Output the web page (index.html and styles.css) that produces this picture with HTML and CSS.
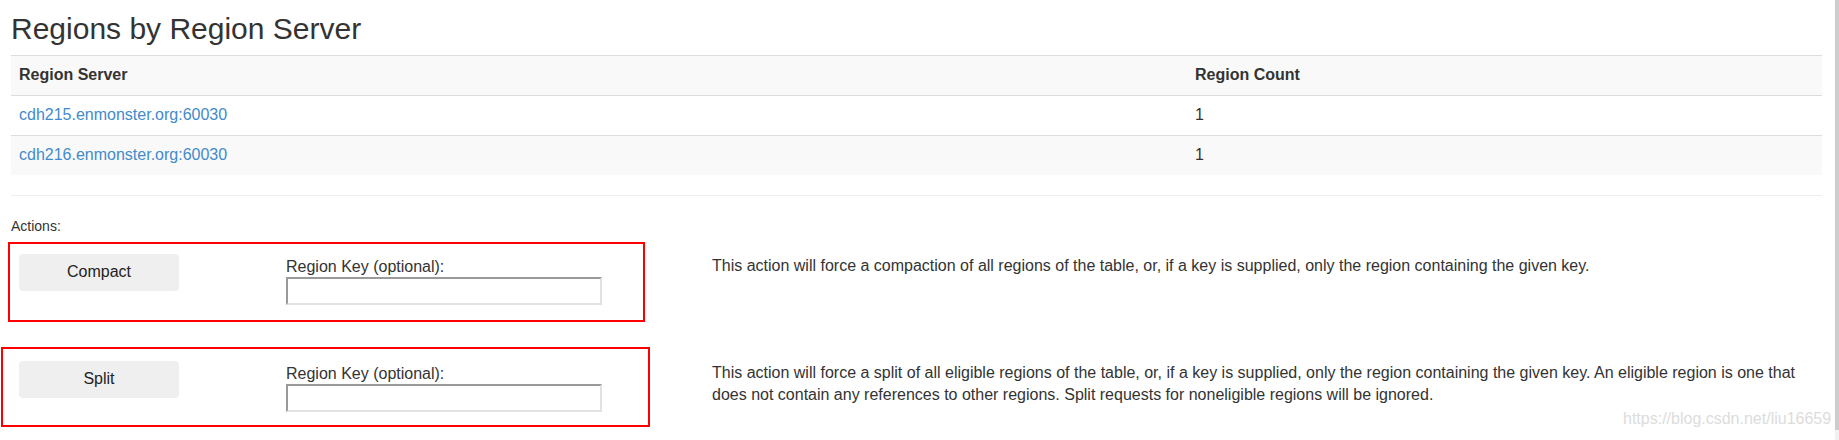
FILE: index.html
```html
<!DOCTYPE html>
<html lang="en">
<head>
<meta charset="utf-8">
<title>Regions by Region Server</title>
<link rel="stylesheet" href="styles.css">
</head>
<body>
<div class="page">
  <h2 class="title">Regions by Region Server</h2>
  <table class="rs-table">
    <tr class="striped">
      <th class="col-server">Region Server</th>
      <th>Region Count</th>
    </tr>
    <tr>
      <td><a href="#">cdh215.enmonster.org:60030</a></td>
      <td>1</td>
    </tr>
    <tr class="striped">
      <td><a href="#">cdh216.enmonster.org:60030</a></td>
      <td>1</td>
    </tr>
  </table>
  <hr class="rule">
  <p class="actions-label">Actions:</p>
  <div class="action-row first">
    <div class="btn-cell"><button class="btn" type="button">Compact</button></div>
    <div class="key-cell">
      <div class="key-label">Region Key (optional):</div>
      <input class="key-input" type="text">
    </div>
    <div class="desc">This action will force a compaction of all regions of the table, or, if a key is supplied, only the region containing the given key.</div>
  </div>
  <div class="action-row second">
    <div class="btn-cell"><button class="btn" type="button">Split</button></div>
    <div class="key-cell">
      <div class="key-label">Region Key (optional):</div>
      <input class="key-input" type="text">
    </div>
    <div class="desc">This action will force a split of all eligible regions of the table, or, if a key is supplied, only the region containing the given key. An eligible region is one that does not contain any references to other regions. Split requests for noneligible regions will be ignored.</div>
  </div>
</div>
<div class="mark mark-compact"></div>
<div class="mark mark-split"></div>
<div class="watermark">https://blog.csdn.net/liu16659</div>
<div class="scroll-thumb"></div>
<div class="scroll-rest"></div>
</body>
</html>
```
FILE: styles.css
```css
html, body {
  margin: 0;
  padding: 0;
  background: #ffffff;
}
body {
  position: relative;
  width: 1839px;
  height: 440px;
  overflow: hidden;
  font-family: "Liberation Sans", Arial, sans-serif;
  font-size: 16px;
  line-height: 1.42857;
  color: #333333;
}
.page {
  padding: 12px 17px 0 11px;
}
.title {
  margin: 0 0 10px 0;
  font-size: 30px;
  line-height: 33px;
  font-weight: normal;
  color: #333333;
}
.rs-table {
  width: 100%;
  border-collapse: collapse;
  border-spacing: 0;
  margin-bottom: 20px;
}
.rs-table th,
.rs-table td {
  padding: 8px;
  border-top: 1px solid #dddddd;
  text-align: left;
  vertical-align: top;
  line-height: 1.42857;
}
.rs-table th {
  font-weight: bold;
}
.col-server {
  width: 1160px;
}
.rs-table .striped {
  background: #f9f9f9;
}
.rs-table a {
  color: #428bca;
  text-decoration: none;
}
.rule {
  margin: 20px 0;
  border: 0;
  border-top: 1px solid #eeeeee;
  height: 0;
}
.actions-label {
  margin: 0;
  font-size: 14px;
  line-height: 20px;
}
.action-row {
  display: grid;
  grid-template-columns: 275px 426px 1fr;
  align-items: start;
}
.action-row.first {
  margin-top: 18px;
}
.action-row.second {
  margin-top: 56px;
}
.btn-cell {
  padding-left: 8px;
}
.btn {
  display: block;
  width: 160px;
  height: 37px;
  padding: 6px 12px;
  border: 0;
  border-radius: 4px;
  background: #efefef;
  color: #222222;
  font-family: "Liberation Sans", Arial, sans-serif;
  font-size: 16px;
  line-height: 1.42857;
  text-align: center;
}
.key-cell {
  padding-top: 2px;
}
.key-label {
  line-height: 21px;
}
.key-input {
  display: block;
  box-sizing: border-box;
  width: 316px;
  height: 28px;
  margin: 0;
  padding: 0 4px;
  border-style: solid;
  border-width: 2px;
  border-color: #9a9a9a #e2e2e2 #e2e2e2 #9a9a9a;
  background: #ffffff;
  font-family: "Liberation Sans", Arial, sans-serif;
  font-size: 14px;
}
.desc {
  padding-top: 1px;
  line-height: 22.86px;
}
.mark {
  position: absolute;
  box-sizing: border-box;
  border: 2px solid #ff0000;
  height: 80px;
}
.mark-compact {
  left: 8px;
  top: 242px;
  width: 637px;
}
.mark-split {
  left: 1px;
  top: 347px;
  width: 649px;
}
.watermark {
  position: absolute;
  left: 1623px;
  top: 411px;
  font-size: 16px;
  line-height: 16px;
  color: #dcdcdc;
  white-space: nowrap;
}
.scroll-thumb {
  position: absolute;
  right: 0;
  top: 0;
  width: 4px;
  height: 430px;
  background: #cdcdcd;
}
.scroll-rest {
  position: absolute;
  right: 0;
  top: 430px;
  width: 4px;
  height: 10px;
  background: #f1f1f1;
}
```
